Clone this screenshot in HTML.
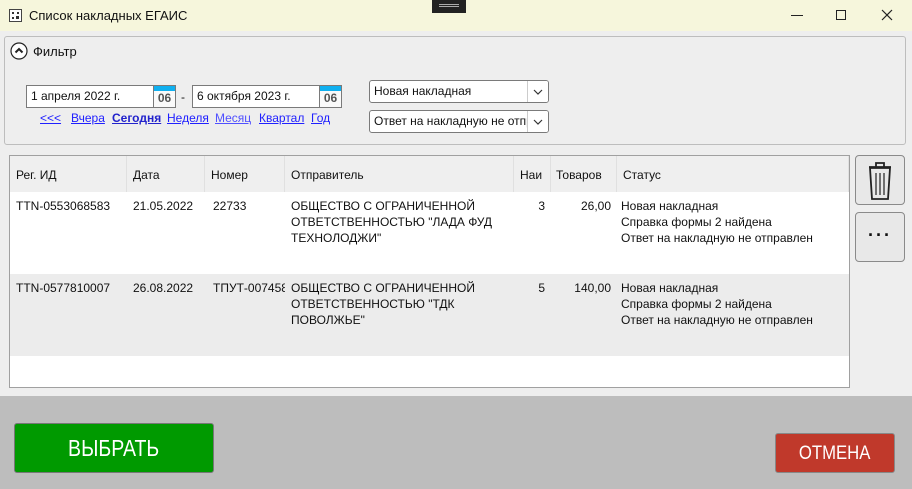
<!DOCTYPE html>
<html><head><meta charset="utf-8"><style>
*{box-sizing:border-box;margin:0;padding:0}
body{width:912px;height:489px;overflow:hidden;background:#eeeeee;font-family:"Liberation Sans","DejaVu Sans",sans-serif;font-size:12px;color:#111;position:relative}
.abs{position:absolute}
.title{left:0;top:0;width:912px;height:31px;background:#f6f6dc}
.grp{left:4px;top:36px;width:902px;height:109px;border:1px solid #bdbdbd;border-radius:3px}
.inp{background:#fff;border:1px solid #7a7a7a;height:23px;font-size:12px;line-height:21px;padding-left:4px;white-space:nowrap;overflow:hidden}
.cal{position:absolute;right:0;top:0;width:22px;height:21px;border-left:1px solid #7a7a7a;font-weight:bold;color:#555;font-size:12px;text-align:center;line-height:24px;background:#fafafa}
.cal:before{content:"";position:absolute;left:0;right:0;top:0;height:5px;background:#10b0f0}
.lnk{top:111px;color:#2020ff;text-decoration:underline;font-size:12px}
.tbl{left:9px;top:155px;width:841px;height:233px;background:#fff;border:1px solid #a0a0a0;font-family:"Liberation Sans Narrow","Liberation Sans",sans-serif;font-size:12px}
.hd{position:absolute;top:0;height:36px;line-height:38px;padding-left:6px;background:#efefef;border-right:1px solid #e0e0e0;white-space:nowrap;overflow:hidden}
.c{position:absolute;padding:6px 6px;line-height:16px;white-space:nowrap;overflow:hidden}
.row{position:absolute;left:0;width:839px;height:82px}
.sb{left:855px;width:50px;height:50px;border:1px solid #8a8a8a;border-radius:4px;background:#e8e8e8}
.dd{position:absolute;right:0;top:0;width:21px;height:21px;border-left:1px solid #ccc;background:#fff}
</style></head><body>
<div class="abs title"></div>
<svg class="abs" style="left:9px;top:9px" width="13" height="13"><rect x=".5" y=".5" width="12" height="12" fill="#fff" stroke="#444"/><path d="M3 3h2v2H3zM8 3h2v2H8zM3 8h2v2H3zM7 7h3v3H7z" fill="#333"/></svg>
<div class="abs" style="left:29px;top:8px;font-size:13px">Список накладных ЕГАИС</div>
<div class="abs" style="left:432px;top:0;width:34px;height:13px;background:#222"><div style="margin:4px 7px;height:3px;border-top:1px solid #aaa;border-bottom:1px solid #aaa"></div></div>
<div class="abs" style="left:791px;top:15px;width:12px;height:1px;background:#222"></div>
<div class="abs" style="left:836px;top:10px;width:10px;height:10px;border:1px solid #222"></div>
<svg class="abs" style="left:881px;top:9px" width="12" height="12"><path d="M1 1L11 11M11 1L1 11" stroke="#222" stroke-width="1.2"/></svg>
<div class="abs grp"></div>
<svg class="abs" style="left:10px;top:42px" width="18" height="18"><circle cx="9" cy="9" r="8" fill="#fff" stroke="#222" stroke-width="1.2"/><path d="M5.5 10.5L9 7l3.5 3.5" fill="none" stroke="#222" stroke-width="2"/></svg>
<div class="abs" style="left:33px;top:44px;font-size:13px">Фильтр</div>
<div class="abs inp" style="left:26px;top:85px;width:150px">1 апреля 2022 г.<div class="cal">06</div></div>
<div class="abs" style="left:181px;top:90px">-</div>
<div class="abs inp" style="left:192px;top:85px;width:150px">6 октября 2023 г.<div class="cal">06</div></div>
<div class="abs lnk" style="left:40px">&lt;&lt;&lt;</div>
<div class="abs lnk" style="left:71px">Вчера</div>
<div class="abs lnk" style="left:112px;font-weight:bold;color:#2222cc">Сегодня</div>
<div class="abs lnk" style="left:167px">Неделя</div>
<div class="abs lnk" style="left:215px;color:#5050ff">Месяц</div>
<div class="abs lnk" style="left:259px">Квартал</div>
<div class="abs lnk" style="left:311px">Год</div>
<div class="abs inp" style="left:369px;top:80px;width:180px;border-radius:3px">Новая накладная<div class="dd"><svg width="20" height="21"><path d="M6 9l4 4 4-4" fill="none" stroke="#333" stroke-width="1.2"/></svg></div></div>
<div class="abs inp" style="left:369px;top:110px;width:180px;border-radius:3px;padding-right:21px">Ответ на накладную не отпр<div class="dd"><svg width="20" height="21"><path d="M6 9l4 4 4-4" fill="none" stroke="#333" stroke-width="1.2"/></svg></div></div>
<div class="abs tbl">
<div class="hd" style="left:0;width:117px">Рег. ИД</div>
<div class="hd" style="left:117px;width:78px">Дата</div>
<div class="hd" style="left:195px;width:80px">Номер</div>
<div class="hd" style="left:275px;width:229px">Отправитель</div>
<div class="hd" style="left:504px;width:37px">Наи</div>
<div class="hd" style="left:541px;width:66px;padding-left:5px">Товаров</div>
<div class="hd" style="left:607px;width:232px">Статус</div>
<div class="row" style="top:36px;background:#fff">
<div class="c" style="left:0">TTN-0553068583</div><div class="c" style="left:117px">21.05.2022</div><div class="c" style="left:197px">22733</div>
<div class="c" style="left:275px">ОБЩЕСТВО С ОГРАНИЧЕННОЙ<br>ОТВЕТСТВЕННОСТЬЮ "ЛАДА ФУД<br>ТЕХНОЛОДЖИ"</div>
<div class="c" style="left:504px;width:37px;text-align:right">3</div><div class="c" style="left:541px;width:66px;text-align:right">26,00</div>
<div class="c" style="left:605px">Новая накладная<br>Справка формы 2 найдена<br>Ответ на накладную не отправлен</div></div>
<div class="row" style="top:118px;background:#ececec">
<div class="c" style="left:0">TTN-0577810007</div><div class="c" style="left:117px">26.08.2022</div><div class="c" style="left:197px;width:78px">ТПУТ-007458</div>
<div class="c" style="left:275px">ОБЩЕСТВО С ОГРАНИЧЕННОЙ<br>ОТВЕТСТВЕННОСТЬЮ "ТДК<br>ПОВОЛЖЬЕ"</div>
<div class="c" style="left:504px;width:37px;text-align:right">5</div><div class="c" style="left:541px;width:66px;text-align:right">140,00</div>
<div class="c" style="left:605px">Новая накладная<br>Справка формы 2 найдена<br>Ответ на накладную не отправлен</div></div>
</div>
<div class="abs sb" style="top:155px"><svg width="48" height="48"><path d="M13 11h22M20 11v-4h8v4" fill="none" stroke="#222" stroke-width="1.8"/><path d="M14 12h20l-2 31h-16z" fill="none" stroke="#222" stroke-width="1.8"/><path d="M20 17v22M24 17v22M28 17v22" stroke="#222" stroke-width="1.2"/></svg></div>
<div class="abs sb" style="top:212px;text-align:center;line-height:44px;font-size:18px;font-weight:bold;letter-spacing:2px">&middot;&middot;&middot;</div>
<div class="abs" style="left:0;top:396px;width:912px;height:93px;background:#bdbdbd"></div>
<div class="abs" style="left:14px;top:423px;width:200px;height:50px;background:#009a00;border:1px solid #777;border-radius:3px;color:#fff;font-size:23px;text-align:center;line-height:48px"><span style="display:inline-block;transform:scaleX(.85)">ВЫБРАТЬ</span></div>
<div class="abs" style="left:775px;top:433px;width:120px;height:40px;background:#c0392b;border:1px solid #888;border-radius:3px;color:#fff;font-size:19px;text-align:center;line-height:40px"><span style="display:inline-block;transform:scaleX(.88)">ОТМЕНА</span></div>
</body></html>
